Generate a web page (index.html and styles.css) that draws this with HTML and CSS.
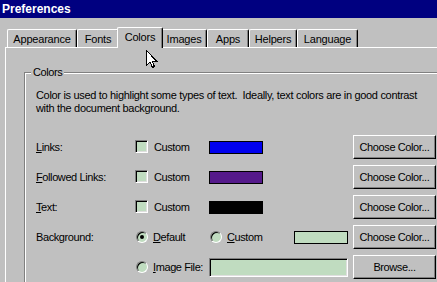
FILE: index.html
```html
<!DOCTYPE html>
<html lang="en">
<head>
    <meta charset="UTF-8">
    <title>Preferences</title>
    <link rel="stylesheet" href="styles.css">
</head>
<body>

    <div class="window">
        <div class="titlebar">Preferences</div>

        <div class="tabs">
            <div class="tab tab-appearance">Appearance</div>
            <div class="tab tab-fonts">Fonts</div>
            <div class="tab tab-colors active">Colors</div>
            <div class="tab tab-images">Images</div>
            <div class="tab tab-apps">Apps</div>
            <div class="tab tab-helpers">Helpers</div>
            <div class="tab tab-language">Language</div>
        </div>

        <div class="panel">
            <div class="group">
                <div class="group-inner">
                    <div class="group-label">Colors</div>
                    <p class="intro">Color is used to highlight some types of text.&nbsp; Ideally, text colors are in good contrast<br>with the document background.</p>

                    <div class="rows">
                        <!-- links -->
                        <div class="label"><u>L</u>inks:</div>
                        <label class="check"><span class="checkbox"></span>Custom</label>
                        <div class="cell"><span class="swatch swatch-link"></span></div>
                        <button class="btn">Choose Color...</button>

                        <!-- followed links -->
                        <div class="label"><u>F</u>ollowed Links:</div>
                        <label class="check"><span class="checkbox"></span>Custom</label>
                        <div class="cell"><span class="swatch swatch-visited"></span></div>
                        <button class="btn">Choose Color...</button>

                        <!-- text -->
                        <div class="label"><u>T</u>ext:</div>
                        <label class="check"><span class="checkbox"></span>Custom</label>
                        <div class="cell"><span class="swatch swatch-text"></span></div>
                        <button class="btn">Choose Color...</button>

                        <!-- background -->
                        <div class="label">Background:</div>
                        <label class="check"><span class="radio on"></span><span><u>D</u>efault</span></label>
                        <div class="cell split">
                            <label class="check"><span class="radio"></span><span><u>C</u>ustom</span></label>
                            <span class="swatch swatch-bg"></span>
                        </div>
                        <button class="btn">Choose Color...</button>

                        <!-- image file -->
                        <div class="label"></div>
                        <label class="check"><span class="radio"></span><span><u>I</u>mage File:</span></label>
                        <div class="cell"><span class="field"></span></div>
                        <button class="btn">Browse...</button>
                    </div>
                </div>
            </div>
        </div>

        <svg class="cursor" width="12" height="19" viewBox="0 0 12 19">
            <path d="M0.5 0.5 V15.5 L4 12 L6.5 17.5 L8.5 16.5 L6 11 H10.5 Z" fill="#fff" stroke="#000" stroke-width="1" stroke-linejoin="miter"/>
        </svg>
    </div>

</body>
</html>
```

FILE: styles.css
```css
body {
    margin: 0;
}

.window {
    position: relative;
    width: 437px;
    height: 282px;
    overflow: hidden;
    background-color: #c0c0c0;
    font-family: "Liberation Sans", Arial, sans-serif;
    font-size: 11px;
    line-height: 13px;
    letter-spacing: -0.4px;
    color: #000;
}

.titlebar {
    height: 18px;
    line-height: 19px;
    padding-left: 2px;
    background-color: #000080;
    color: #fff;
    font-size: 12px;
    font-weight: bold;
    letter-spacing: 0;
}

/* tabs */
.tabs {
    display: flex;
    align-items: flex-end;
    height: 20px;
    margin: 9px 0 0 7px;
}

.tab {
    box-sizing: border-box;
    height: 18px;
    padding-top: 2px;
    line-height: 15px;
    text-align: center;
    letter-spacing: -0.2px;
    border-top: 1px solid #fff;
    border-left: 1px solid #fff;
    border-right: 1px solid #000;
    border-radius: 2px 2px 0 0;
    box-shadow: inset -1px 0 #808080;
    background-color: #c0c0c0;
}

.tab.active {
    position: relative;
    height: 21px;
    margin: 0 -2px -1px;
}

.tab-appearance { width: 70px; }
.tab-fonts { width: 42px; }
.tab-colors { width: 46px; }
.tab-images { width: 46px; }
.tab-apps { width: 42px; }
.tab-helpers { width: 48px; }
.tab-language { width: 61px; }

/* panel + group box */
.panel {
    width: 460px;
    height: 260px;
    margin-left: 5px;
    padding: 24px 0 0 18px;
    border-top: 1px solid #fff;
    border-left: 1px solid #fff;
}

.group {
    height: 220px;
    border-top: 1px solid #808080;
    border-left: 1px solid #808080;
}

.group-inner {
    height: 219px;
    padding-left: 10px;
    border-top: 1px solid #fff;
    border-left: 1px solid #fff;
}

.group-label {
    width: fit-content;
    margin: -8px 0 0 -5px;
    padding: 0 2px;
    background-color: #c0c0c0;
}

.intro {
    margin: 10px 0 0;
    letter-spacing: -0.32px;
}

.rows {
    display: grid;
    grid-template-columns: 99px 74px 144px 83px;
    grid-auto-rows: 30px;
    align-items: center;
    margin-top: 17px;
}

.check {
    display: flex;
    align-items: center;
}

.checkbox {
    box-sizing: border-box;
    width: 13px;
    height: 13px;
    margin: -1px 6px 0 0;
    border: 1px solid;
    border-color: #808080 #fff #fff #808080;
    box-shadow: inset 1px 1px #000, inset -1px -1px #dfdfdf;
    background-color: #c0dcc0;
}

.radio {
    box-sizing: border-box;
    display: flex;
    align-items: center;
    justify-content: center;
    width: 12px;
    height: 12px;
    margin: 0 5px 0 1px;
    border: 1px solid;
    border-color: #808080 #fff #fff #808080;
    border-radius: 50%;
    box-shadow: inset 1px 1px #000;
    background-color: #c0dcc0;
}

.radio.on::after {
    content: "";
    width: 4px;
    height: 4px;
    border-radius: 50%;
    background-color: #000;
}

.cell {
    display: flex;
    align-items: center;
}

.split {
    width: 139px;
    justify-content: space-between;
}

.swatch {
    box-sizing: border-box;
    display: block;
    width: 54px;
    height: 13px;
    border: 1px solid #000;
}

.swatch-link { background-color: #0000ee; }
.swatch-visited { background-color: #551a8b; }
.swatch-text { background-color: #000; }
.swatch-bg { background-color: #c0dcc0; }

.field {
    box-sizing: border-box;
    display: block;
    width: 139px;
    height: 19px;
    border: 1px solid;
    border-color: #808080 #fff #fff #808080;
    box-shadow: inset 1px 1px #000, inset -1px -1px #dfdfdf;
    background-color: #c0dcc0;
}

.btn {
    box-sizing: border-box;
    width: 83px;
    height: 24px;
    padding: 0;
    font: inherit;
    letter-spacing: inherit;
    color: #000;
    background-color: #c0c0c0;
    border: 1px solid;
    border-color: #fff #000 #000 #fff;
    box-shadow: inset -1px -1px #808080;
}

.cursor {
    position: absolute;
    left: 146px;
    top: 50px;
    shape-rendering: crispEdges;
}
```
